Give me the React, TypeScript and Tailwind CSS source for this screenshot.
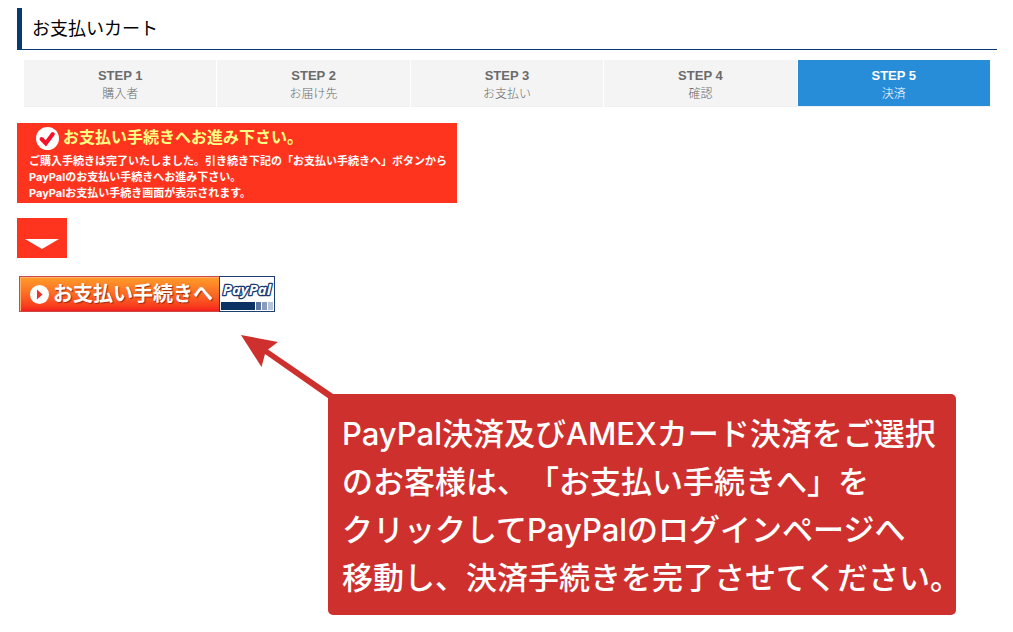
const steps = [
  { step: "STEP 1", label: "購入者" },
  { step: "STEP 2", label: "お届け先" },
  { step: "STEP 3", label: "お支払い" },
  { step: "STEP 4", label: "確認" },
  { step: "STEP 5", label: "決済", current: true },
];

function StepBar() {
  return (
    <ol className="mx-[7px] mt-2.5 grid grid-cols-5 gap-px">
      {steps.map(({ step, label, current }) => (
        <li
          key={step}
          aria-current={current ? "step" : undefined}
          className={
            current
              ? "flex flex-col items-center border-b border-[#f0f0f0] bg-[#288dd8] bg-clip-padding pt-[7px] pb-[3px] text-white"
              : "flex flex-col items-center border-b border-[#f0f0f0] bg-[#f4f4f4] pt-[7px] pb-[3px] text-[#6b6b6b]"
          }
        >
          <span className="text-[13px] leading-[18px] font-bold">{step}</span>
          <span className="text-xs leading-[18px] font-light">{label}</span>
        </li>
      ))}
    </ol>
  );
}

function CheckIcon() {
  return (
    <svg className="size-[23px]" viewBox="0 0 23 23" aria-hidden="true">
      <circle cx="11.5" cy="11.5" r="11.5" fill="#fff" />
      <path d="M5.6 12 L9.8 16.4 L16.8 7" fill="none" stroke="#f5122a" strokeWidth="4" strokeLinecap="round" strokeLinejoin="miter" />
    </svg>
  );
}

function Notice() {
  return (
    <section className="mt-4 w-[440px] max-w-full bg-[#ff341e] pt-[3px] pb-0.5 pl-3">
      <h2 className="flex items-center gap-1 pl-[7px] text-base leading-6 font-bold text-[#ffff84]">
        <CheckIcon />
        お支払い手続きへお進み下さい。
      </h2>
      <p className="mt-[3px] font-['Inter','Noto_Sans_CJK_JP',sans-serif] text-[11px] leading-4 font-bold whitespace-nowrap text-white">
        ご購入手続きは完了いたしました。引き続き下記の「お支払い手続きへ」ボタンから
        <br />
        PayPalのお支払い手続きへお進み下さい。
        <br />
        PayPalお支払い手続き画面が表示されます。
      </p>
    </section>
  );
}

function PayPalMark() {
  return (
    <svg className="h-9 w-14" viewBox="0 0 56 36" aria-hidden="true">
      <rect x="0.5" y="0.5" width="55" height="35" fill="#fff" stroke="#1c3f76" />
      <text
        x="28"
        y="19"
        textAnchor="middle"
        fontFamily="'Open Sans', sans-serif"
        fontSize="15"
        fontWeight="bold"
        fontStyle="italic"
        fill="#fff"
        stroke="#173a70"
        strokeWidth="2.6"
        strokeLinejoin="round"
        paintOrder="stroke"
      >
        PayPal
      </text>
      <rect x="2" y="26" width="34" height="8" fill="#0c3264" />
      <rect x="37" y="26" width="5" height="8" fill="#5b779f" />
      <rect x="43" y="26" width="5" height="8" fill="#889dbb" />
      <rect x="49" y="26" width="5" height="8" fill="#b7c4d7" />
    </svg>
  );
}

function PayButton() {
  return (
    <button type="button" className="mt-[18px] ml-0.5 flex h-9 w-fit cursor-pointer items-stretch">
      <span className="flex w-[200px] items-center gap-1 border border-r-0 border-[#c94a45] bg-linear-to-b from-[#ff9c2a] to-[#f51c1c] pl-2.5 text-xl font-bold whitespace-nowrap text-white inset-shadow-[1px_1px_0_#ffb070] text-shadow-[1px_1px_1px_#9c2a10]">
        <svg className="size-[19px] shrink-0" viewBox="0 0 19 19" aria-hidden="true">
          <circle cx="9.5" cy="9.5" r="9.5" fill="#fff" />
          <path d="M7 4.5 L12.5 9.5 L7 14.5 Z" fill="#e8342a" />
        </svg>
        お支払い手続きへ
      </span>
      <PayPalMark />
    </button>
  );
}

function Callout() {
  return (
    <aside className="relative mt-[82px] ml-[311px] w-[628px] rounded-[5px] bg-[#cd302d] px-3.5 pt-4 pb-[13px] font-['Inter','Noto_Sans_CJK_JP',sans-serif] text-[31px] leading-[48px] font-medium whitespace-nowrap text-white [text-spacing-trim:space-all]">
      <svg className="absolute -top-[60px] -left-[88px] h-[70px] w-24" viewBox="0 0 96 70" aria-hidden="true">
        <path d="M1 1 L38 8 L28 15.5 L96 62 L92 67 L25 20 L21.5 33 Z" fill="#cd302d" />
      </svg>
      PayPal決済及びAMEXカード決済をご選択
      <br />
      のお客様は、「お支払い手続きへ」を
      <br />
      クリックしてPayPalのログインページへ
      <br />
      移動し、決済手続きを完了させてください。
    </aside>
  );
}

export default function App() {
  return (
    <main className="bg-white pt-2 pr-4 pb-4 pl-[17px] font-['Liberation_Sans','Noto_Sans_CJK_JP',sans-serif]">
      <header className="flex">
        <span className="w-[5px] bg-[#073a75]" />
        <h1 className="grow border-b border-[#073a75] pt-[7px] pb-[5px] pl-2.5 text-lg leading-[29px] text-black">
          お支払いカート
        </h1>
      </header>
      <StepBar />
      <Notice />
      <div className="mt-[15px] flex h-10 w-[50px] justify-center bg-[#ff341e] pt-[21px]">
        <svg className="h-2.5 w-[34px]" viewBox="0 0 34 10" aria-hidden="true">
          <path d="M0 0 H34 L17 10 Z" fill="#fff" />
        </svg>
      </div>
      <PayButton />
      <Callout />
    </main>
  );
}
